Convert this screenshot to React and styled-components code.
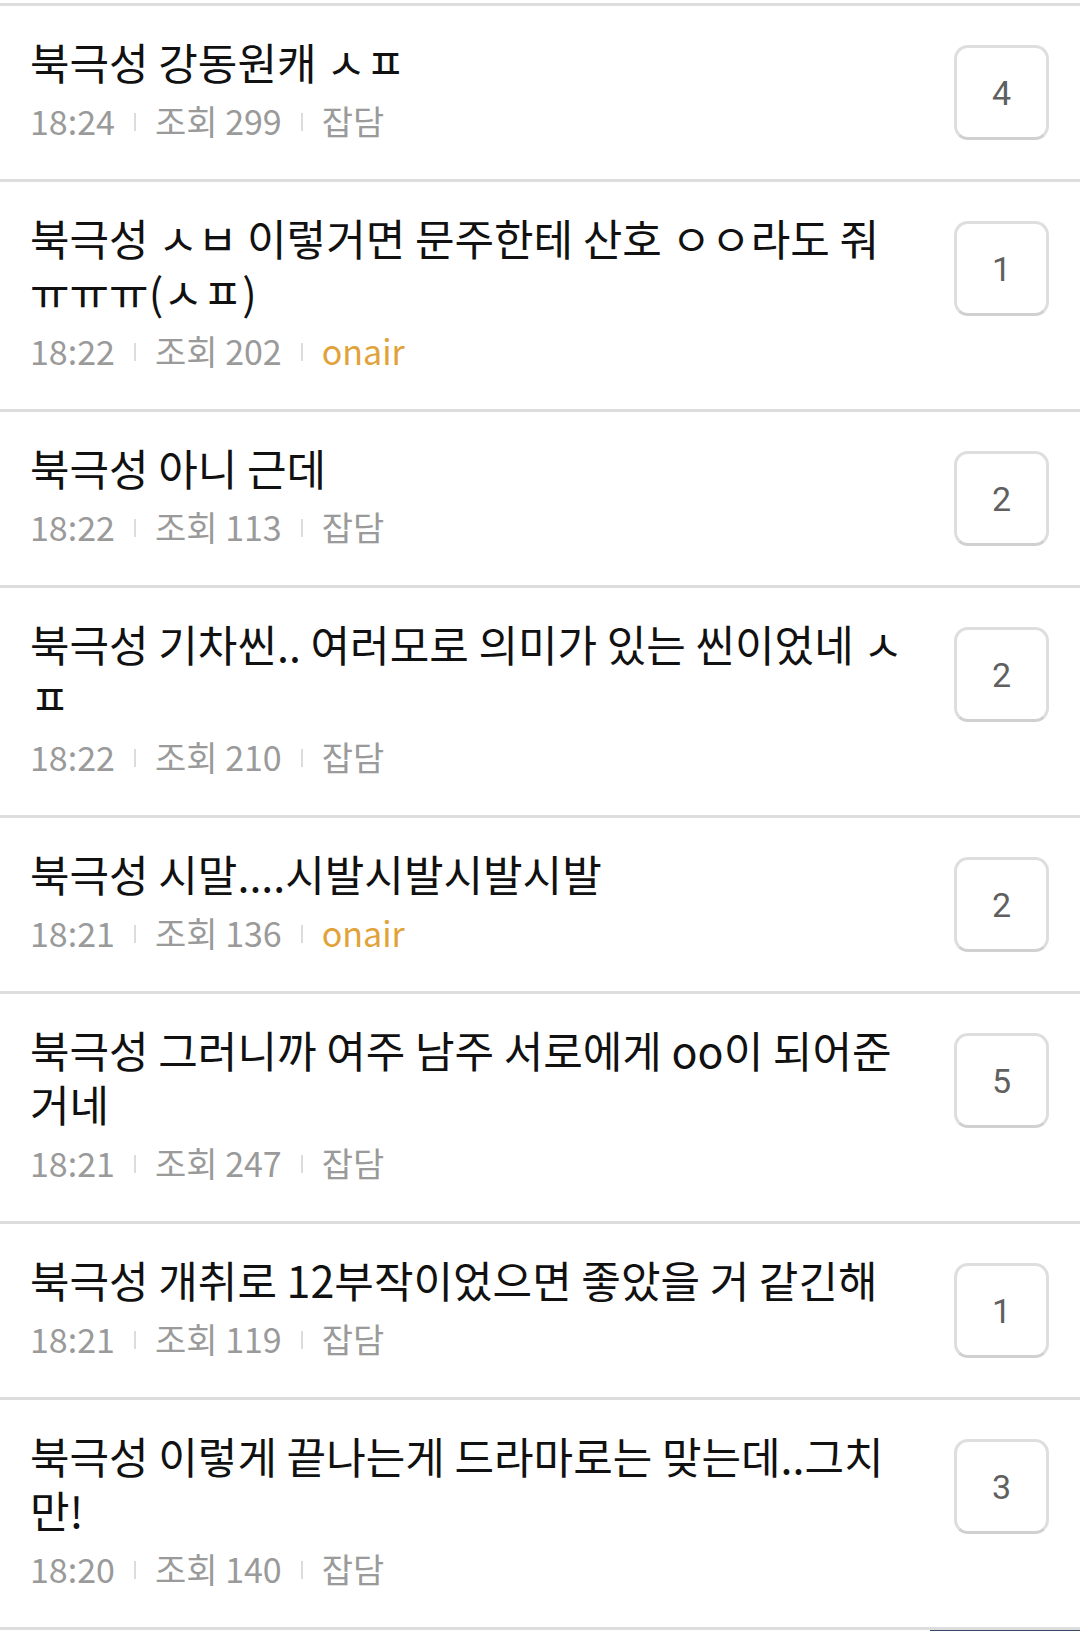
import React from "react";
import styled, { createGlobalStyle } from "styled-components";

const Global = createGlobalStyle`
  html, body { margin: 0; padding: 0; background: #fff; }
  body { font-family: "Noto Sans CJK KR", "Noto Sans", sans-serif; }
  * { box-sizing: border-box; }
`;

const Page = styled.div`
  width: 1080px;
  padding-top: 3px;
  background: #fff;
`;

const List = styled.ul`
  list-style: none;
  margin: 0;
  padding: 0;
  border-top: 3px solid #dddddd;
`;

const Row = styled.li`
  display: flex;
  align-items: flex-start;
  gap: 36px;
  padding: 28px 31px 0 30px;
  height: ${(p) => (p.$double ? 230 : 176)}px;
  border-bottom: 3px solid #dddddd;
`;

const Body = styled.div`
  flex: 1;
  min-width: 0;
`;

const Title = styled.div`
  font-family: "Noto Sans CJK KR", "Noto Sans", sans-serif;
  font-size: 43px;
  line-height: 54px;
  color: #111;
  word-break: keep-all;
`;

const Meta = styled.div`
  display: flex;
  align-items: center;
  margin-top: 11px;
  font-family: "Noto Sans CJK KR", "Noto Sans", sans-serif;
  font-size: 34px;
  line-height: 44px;
  color: #9a9a9a;
`;

const MetaItem = styled.span`
  display: inline-flex;
  align-items: center;
  color: ${(p) => (p.$onair ? "#e2a23a" : "#9a9a9a")};
  &:not(:first-child)::before {
    content: "";
    display: inline-block;
    width: 2px;
    height: 18px;
    margin: 2px 19px 0 19px;
    background: #dcdcdc;
  }
`;

const Badge = styled.div`
  flex: none;
  width: 95px;
  height: 95px;
  margin-top: 11px;
  border: 3px solid #dedede;
  border-bottom-color: #d0d0d0;
  border-radius: 14px;
  display: flex;
  align-items: center;
  justify-content: center;
  font-family: Roboto, "Liberation Sans", sans-serif;
  font-size: 34px;
  color: #606060;
`;

const Footer = styled.div`
  height: 1px;
  display: flex;
  justify-content: flex-end;
`;

const Tab = styled.div`
  width: 150px;
  height: 1px;
  background: #34486a;
`;

const posts = [
  { title: "북극성 강동원캐 ㅅㅍ", time: "18:24", views: 299, cat: "잡담", c: 4 },
  { title: "북극성 ㅅㅂ 이렇거면 문주한테 산호 ㅇㅇ라도 줘 ㅠㅠㅠ(ㅅㅍ)", time: "18:22", views: 202, cat: "onair", c: 1, d: true },
  { title: "북극성 아니 근데", time: "18:22", views: 113, cat: "잡담", c: 2 },
  { title: "북극성 기차씬.. 여러모로 의미가 있는 씬이었네 ㅅ ㅍ", time: "18:22", views: 210, cat: "잡담", c: 2, d: true },
  { title: "북극성 시말....시발시발시발시발", time: "18:21", views: 136, cat: "onair", c: 2 },
  { title: "북극성 그러니까 여주 남주 서로에게 oo이 되어준 거네", time: "18:21", views: 247, cat: "잡담", c: 5, d: true },
  { title: "북극성 개취로 12부작이었으면 좋았을 거 같긴해", time: "18:21", views: 119, cat: "잡담", c: 1 },
  { title: "북극성 이렇게 끝나는게 드라마로는 맞는데..그치 만!", time: "18:20", views: 140, cat: "잡담", c: 3, d: true },
];

export default function App() {
  return (
    <Page>
      <Global />
      <List>
        {posts.map((p, i) => (
          <Row key={i} $double={p.d}>
            <Body>
              <Title>{p.title}</Title>
              <Meta>
                <MetaItem>{p.time}</MetaItem>
                <MetaItem>조회 {p.views}</MetaItem>
                <MetaItem $onair={p.cat === "onair"}>{p.cat}</MetaItem>
              </Meta>
            </Body>
            <Badge>{p.c}</Badge>
          </Row>
        ))}
      </List>
      <Footer>
        <Tab />
      </Footer>
    </Page>
  );
}
